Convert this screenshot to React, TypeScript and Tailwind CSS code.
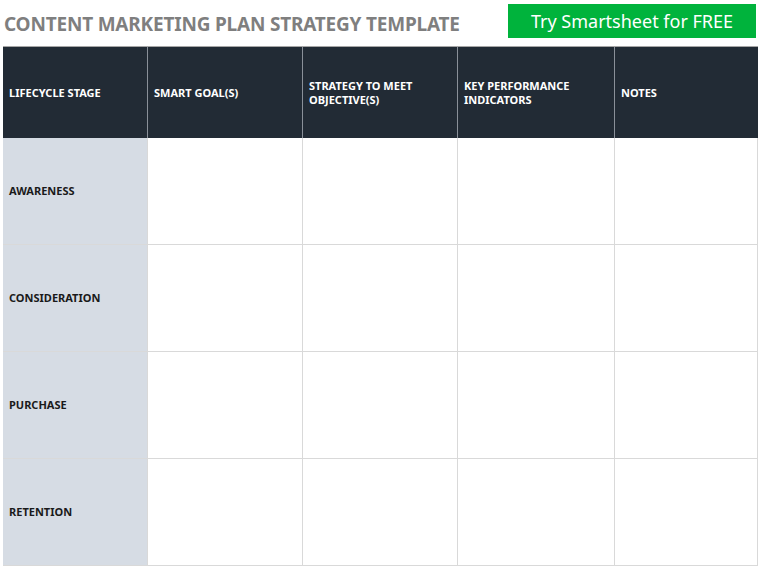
const COLS = "grid grid-cols-[145px_155px_155px_157px_143px]";

const headers = [
  "LIFECYCLE STAGE",
  "SMART GOAL(S)",
  "STRATEGY TO MEET OBJECTIVE(S)",
  "KEY PERFORMANCE INDICATORS",
  "NOTES",
];

const stages = ["AWARENESS", "CONSIDERATION", "PURCHASE", "RETENTION"];

export default function App() {
  return (
    <div className="w-[762px] h-[568px] bg-white font-['Lato','Liberation_Sans',sans-serif]">
      <div className="flex items-center justify-between pl-[4px] pr-[6px] pt-[4px] h-[42px]">
        <h1 className="text-[19px] font-bold text-[#7f7f7f] tracking-[-0.2px] mt-[2px]">
          CONTENT MARKETING PLAN STRATEGY TEMPLATE
        </h1>
        <div className="w-[248px] h-[34px] bg-[#00b33c] text-white flex items-center justify-center text-[18px] font-['Liberation_Sans',sans-serif] self-start">
          Try Smartsheet for FREE
        </div>
      </div>
      <div className="ml-[3px] mt-[4px] w-[755px] border-t border-[#a6a6a6]">
        <div className={`${COLS} h-[91px] bg-[#222b35]`}>
          {headers.map((h, i) => (
            <div
              key={h}
              className={`flex items-center px-[6px] text-white text-[11px] font-bold leading-[14px] ${i < 4 ? "border-r border-[#8a9099]" : ""}`}
            >
              {h}
            </div>
          ))}
        </div>
        {stages.map((s) => (
          <div key={s} className={`${COLS} h-[107px] border-b border-[#d9d9d9]`}>
            <div className="bg-[#d6dce4] flex items-center px-[6px] text-[11px] font-bold text-[#1a1a1a] border-r border-[#d9d9d9]">
              {s}
            </div>
            {[0, 1, 2, 3].map((i) => (
              <div key={i} className={i < 3 ? "border-r border-[#d9d9d9]" : "border-r border-[#d9d9d9]"} />
            ))}
          </div>
        ))}
      </div>
    </div>
  );
}
